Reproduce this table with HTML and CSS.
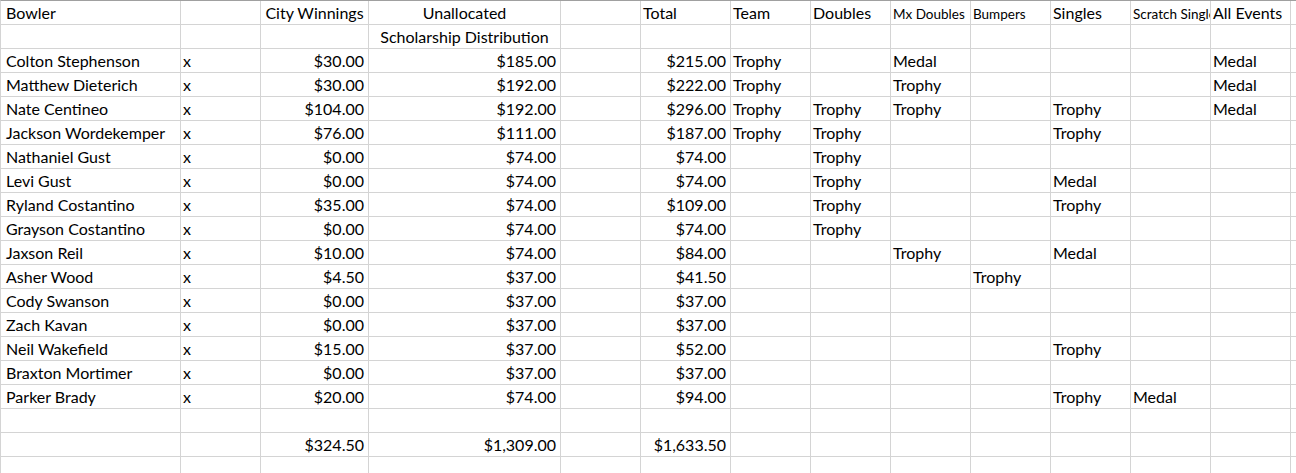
FILE: index.html
```html
<!DOCTYPE html>
<html>
<head>
<meta charset="utf-8">
<link rel="stylesheet" href="styles.css">
<title>Bowling Scholarships</title>
</head>
<body>
<div class="sheet">
  <div class="row">
    <div class="c pl">Bowler</div><div class="c"></div><div class="c ctr">City Winnings</div><div class="c ctr">Unallocated</div><div class="c"></div><div class="c">Total</div><div class="c">Team</div><div class="c">Doubles</div><div class="c sm">Mx Doubles</div><div class="c sm">Bumpers</div><div class="c">Singles</div><div class="c sm">Scratch Singles</div><div class="c">All Events</div><div class="c end"></div>
  </div>
  <div class="row">
    <div class="c pl"></div><div class="c"></div><div class="c"></div><div class="c ctr">Scholarship Distribution</div><div class="c"></div><div class="c"></div><div class="c"></div><div class="c"></div><div class="c"></div><div class="c"></div><div class="c"></div><div class="c"></div><div class="c"></div><div class="c end"></div>
  </div>
  <div class="row">
    <div class="c pl">Colton Stephenson</div><div class="c">x</div><div class="c num">$30.00</div><div class="c num">$185.00</div><div class="c"></div><div class="c num">$215.00</div><div class="c">Trophy</div><div class="c"></div><div class="c">Medal</div><div class="c"></div><div class="c"></div><div class="c"></div><div class="c">Medal</div><div class="c end"></div>
  </div>
  <div class="row">
    <div class="c pl">Matthew Dieterich</div><div class="c">x</div><div class="c num">$30.00</div><div class="c num">$192.00</div><div class="c"></div><div class="c num">$222.00</div><div class="c">Trophy</div><div class="c"></div><div class="c">Trophy</div><div class="c"></div><div class="c"></div><div class="c"></div><div class="c">Medal</div><div class="c end"></div>
  </div>
  <div class="row">
    <div class="c pl">Nate Centineo</div><div class="c">x</div><div class="c num">$104.00</div><div class="c num">$192.00</div><div class="c"></div><div class="c num">$296.00</div><div class="c">Trophy</div><div class="c">Trophy</div><div class="c">Trophy</div><div class="c"></div><div class="c">Trophy</div><div class="c"></div><div class="c">Medal</div><div class="c end"></div>
  </div>
  <div class="row">
    <div class="c pl">Jackson Wordekemper</div><div class="c">x</div><div class="c num">$76.00</div><div class="c num">$111.00</div><div class="c"></div><div class="c num">$187.00</div><div class="c">Trophy</div><div class="c">Trophy</div><div class="c"></div><div class="c"></div><div class="c">Trophy</div><div class="c"></div><div class="c"></div><div class="c end"></div>
  </div>
  <div class="row">
    <div class="c pl">Nathaniel Gust</div><div class="c">x</div><div class="c num">$0.00</div><div class="c num">$74.00</div><div class="c"></div><div class="c num">$74.00</div><div class="c"></div><div class="c">Trophy</div><div class="c"></div><div class="c"></div><div class="c"></div><div class="c"></div><div class="c"></div><div class="c end"></div>
  </div>
  <div class="row">
    <div class="c pl">Levi Gust</div><div class="c">x</div><div class="c num">$0.00</div><div class="c num">$74.00</div><div class="c"></div><div class="c num">$74.00</div><div class="c"></div><div class="c">Trophy</div><div class="c"></div><div class="c"></div><div class="c">Medal</div><div class="c"></div><div class="c"></div><div class="c end"></div>
  </div>
  <div class="row">
    <div class="c pl">Ryland Costantino</div><div class="c">x</div><div class="c num">$35.00</div><div class="c num">$74.00</div><div class="c"></div><div class="c num">$109.00</div><div class="c"></div><div class="c">Trophy</div><div class="c"></div><div class="c"></div><div class="c">Trophy</div><div class="c"></div><div class="c"></div><div class="c end"></div>
  </div>
  <div class="row">
    <div class="c pl">Grayson Costantino</div><div class="c">x</div><div class="c num">$0.00</div><div class="c num">$74.00</div><div class="c"></div><div class="c num">$74.00</div><div class="c"></div><div class="c">Trophy</div><div class="c"></div><div class="c"></div><div class="c"></div><div class="c"></div><div class="c"></div><div class="c end"></div>
  </div>
  <div class="row">
    <div class="c pl">Jaxson Reil</div><div class="c">x</div><div class="c num">$10.00</div><div class="c num">$74.00</div><div class="c"></div><div class="c num">$84.00</div><div class="c"></div><div class="c"></div><div class="c">Trophy</div><div class="c"></div><div class="c">Medal</div><div class="c"></div><div class="c"></div><div class="c end"></div>
  </div>
  <div class="row">
    <div class="c pl">Asher Wood</div><div class="c">x</div><div class="c num">$4.50</div><div class="c num">$37.00</div><div class="c"></div><div class="c num">$41.50</div><div class="c"></div><div class="c"></div><div class="c"></div><div class="c">Trophy</div><div class="c"></div><div class="c"></div><div class="c"></div><div class="c end"></div>
  </div>
  <div class="row">
    <div class="c pl">Cody Swanson</div><div class="c">x</div><div class="c num">$0.00</div><div class="c num">$37.00</div><div class="c"></div><div class="c num">$37.00</div><div class="c"></div><div class="c"></div><div class="c"></div><div class="c"></div><div class="c"></div><div class="c"></div><div class="c"></div><div class="c end"></div>
  </div>
  <div class="row">
    <div class="c pl">Zach Kavan</div><div class="c">x</div><div class="c num">$0.00</div><div class="c num">$37.00</div><div class="c"></div><div class="c num">$37.00</div><div class="c"></div><div class="c"></div><div class="c"></div><div class="c"></div><div class="c"></div><div class="c"></div><div class="c"></div><div class="c end"></div>
  </div>
  <div class="row">
    <div class="c pl">Neil Wakefield</div><div class="c">x</div><div class="c num">$15.00</div><div class="c num">$37.00</div><div class="c"></div><div class="c num">$52.00</div><div class="c"></div><div class="c"></div><div class="c"></div><div class="c"></div><div class="c">Trophy</div><div class="c"></div><div class="c"></div><div class="c end"></div>
  </div>
  <div class="row">
    <div class="c pl">Braxton Mortimer</div><div class="c">x</div><div class="c num">$0.00</div><div class="c num">$37.00</div><div class="c"></div><div class="c num">$37.00</div><div class="c"></div><div class="c"></div><div class="c"></div><div class="c"></div><div class="c"></div><div class="c"></div><div class="c"></div><div class="c end"></div>
  </div>
  <div class="row">
    <div class="c pl">Parker Brady</div><div class="c">x</div><div class="c num">$20.00</div><div class="c num">$74.00</div><div class="c"></div><div class="c num">$94.00</div><div class="c"></div><div class="c"></div><div class="c"></div><div class="c"></div><div class="c">Trophy</div><div class="c">Medal</div><div class="c"></div><div class="c end"></div>
  </div>
  <div class="row">
    <div class="c pl"></div><div class="c"></div><div class="c"></div><div class="c"></div><div class="c"></div><div class="c"></div><div class="c"></div><div class="c"></div><div class="c"></div><div class="c"></div><div class="c"></div><div class="c"></div><div class="c"></div><div class="c end"></div>
  </div>
  <div class="row">
    <div class="c pl"></div><div class="c"></div><div class="c num">$324.50</div><div class="c num">$1,309.00</div><div class="c"></div><div class="c num">$1,633.50</div><div class="c"></div><div class="c"></div><div class="c"></div><div class="c"></div><div class="c"></div><div class="c"></div><div class="c"></div><div class="c end"></div>
  </div>
  <div class="row">
    <div class="c pl"></div><div class="c"></div><div class="c"></div><div class="c"></div><div class="c"></div><div class="c"></div><div class="c"></div><div class="c"></div><div class="c"></div><div class="c"></div><div class="c"></div><div class="c"></div><div class="c"></div><div class="c end"></div>
  </div>
</div>
</body>
</html>
```

FILE: styles.css
```css
html, body {
  margin: 0;
  padding: 0;
  background: #ffffff;
  overflow: hidden;
}

body {
  width: 1296px;
  height: 473px;
  font-family: Lato, "Liberation Sans", sans-serif;
  font-size: 16px;
  color: #000000;
}

.sheet {
  border-top: 1px solid #a0a0a0;
  border-left: 1px solid #d4d4d4;
  width: 1295px;
}

.row {
  display: grid;
  grid-template-columns: 180px 80px 108px 192px 80px 90px 80px 80px 80px 80px 80px 80px 80px 1fr;
  height: 24px;
}

.c {
  box-sizing: border-box;
  height: 24px;
  border-right: 1px solid #d4d4d4;
  border-bottom: 1px solid #d4d4d4;
  padding: 1px 2px 0 2px;
  line-height: 22px;
  white-space: nowrap;
  overflow: hidden;
}

.c.pl {
  padding-left: 5px;
}

.c.num {
  text-align: right;
  padding-right: 4px;
}

.c.ctr {
  text-align: center;
}

.c.sm {
  font-size: 13.5px;
  padding-top: 2px;
}

.c.end {
  border-right: none;
}
```
